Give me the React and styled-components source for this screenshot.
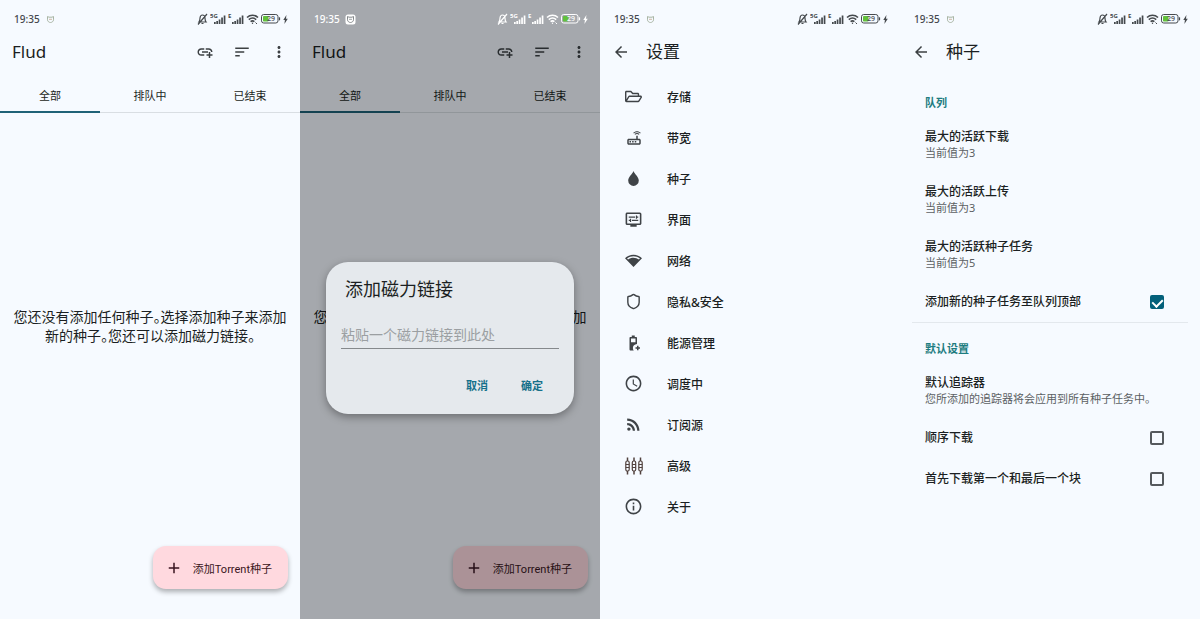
import React, { useState } from 'react';
import styled, { createGlobalStyle } from 'styled-components';
import {
  MdOutlineAddLink,
  MdSort,
  MdMoreVert,
  MdArrowBack,
  MdOutlineRouter,
  MdOutlineDisplaySettings,
  MdOutlineNetworkWifi,
  MdSchedule,
  MdRssFeed,
  MdInfoOutline,
  MdAdd
} from 'react-icons/md';
import { FaRegFolderOpen } from 'react-icons/fa';
import { Shield } from 'lucide-react';

const GlobalStyle = createGlobalStyle`
  * {
    box-sizing: border-box;
  }
  body {
    margin: 0;
    background: #f6faff;
    color: #1b1f22;
    font-family: "Noto Sans", "Noto Sans CJK SC", sans-serif;
  }
  button, input {
    font-family: inherit;
  }
`;

const Screens = styled.main`
  display: grid;
  grid-template-columns: repeat(4, 1fr);
  min-height: 100vh;
`;

const Phone = styled.section`
  position: relative;
  display: flex;
  flex-direction: column;
  min-width: 0;
  background: #f6faff;
`;

const StatusRow = styled.div`
  position: relative;
  z-index: 2;
  display: flex;
  align-items: center;
  justify-content: space-between;
  height: 32px;
  padding: 6px 12px 0 14px;
  color: ${(props) => (props.$light ? '#ffffff' : '#45494d')};
`;

const StatusGroup = styled.div`
  display: flex;
  align-items: center;
  gap: ${(props) => props.$gap}px;
`;

const Clock = styled.span`
  font-size: 10px;
  line-height: 14px;
  font-weight: 500;
`;

const AppBar = styled.header`
  display: flex;
  align-items: center;
  height: 40px;
  padding: 0 12px;
`;

const AppTitle = styled.h1`
  flex: 1;
  margin: 0;
  font-size: 17px;
  line-height: 24px;
  font-weight: 400;
`;

const Toolbar = styled.div`
  display: flex;
  gap: 19px;
`;

const IconButton = styled.button`
  display: flex;
  padding: 0;
  border: none;
  background: none;
  color: #3c4043;
  font-size: 18px;
  cursor: pointer;
`;

const BackButton = styled(IconButton)`
  margin-right: 16px;
`;

const Tabs = styled.nav`
  display: flex;
  padding-top: 8px;
  border-bottom: 1px solid #d9dee3;
`;

const Tab = styled.button`
  flex: 1;
  height: 33px;
  margin-bottom: -1px;
  padding: 0;
  border: none;
  border-bottom: 2px solid ${(props) => (props.$active ? '#1f6277' : 'transparent')};
  background: none;
  color: #1b1f22;
  font-size: 11px;
  line-height: 16px;
  cursor: pointer;
`;

const Empty = styled.div`
  flex: 1;
  display: flex;
  align-items: center;
  justify-content: center;
  padding: 0 12px;
`;

const EmptyText = styled.p`
  margin: 0;
  font-size: 14px;
  line-height: 19px;
  font-feature-settings: "palt";
  text-align: center;
`;

const Bottom = styled.footer`
  display: flex;
  justify-content: flex-end;
  padding: 8px 12px 30px;
`;

const AddTorrent = styled.button`
  display: flex;
  align-items: center;
  gap: 10px;
  height: 43px;
  padding: 0 16px 0 12px;
  border: none;
  border-radius: 13px;
  background: #ffd9df;
  box-shadow: 0 3px 5px rgba(0, 0, 0, 0.3);
  color: #3a1520;
  font-family: Roboto, "Noto Sans CJK SC", sans-serif;
  font-size: 11px;
  cursor: pointer;
`;

const Scrim = styled.div`
  position: absolute;
  inset: 0;
  z-index: 1;
  display: flex;
  align-items: center;
  justify-content: center;
  padding: 57px 26px 0;
  background: rgba(0, 3, 5, 0.33);
`;

const Dialog = styled.form`
  flex: 1;
  padding: 15px 15px 17px;
  border-radius: 22px;
  background: #e5e9ed;
  box-shadow: 0 3px 8px rgba(0, 0, 0, 0.35);
`;

const DialogTitle = styled.label`
  display: block;
  margin: 0 4px 20px;
  font-size: 18px;
  line-height: 24px;
`;

const MagnetInput = styled.input`
  display: block;
  width: 100%;
  height: 28px;
  padding: 0;
  border: none;
  border-bottom: 1px solid #85898c;
  border-radius: 0;
  background: none;
  color: #1b1f22;
  font-size: 14px;
  outline: none;
  &::placeholder {
    color: #9b9fa2;
  }
`;

const DialogActions = styled.div`
  display: flex;
  justify-content: flex-end;
  gap: 33px;
  padding: 24px 16px 0 0;
`;

const DialogButton = styled.button`
  height: 24px;
  padding: 0;
  border: none;
  background: none;
  color: #15708a;
  font-size: 11px;
  font-weight: 700;
  cursor: pointer;
`;

const ScreenTitle = styled.h1`
  margin: 0;
  font-size: 17px;
  line-height: 24px;
  font-weight: 400;
`;

const SettingsList = styled.nav`
  padding-top: 4px;
`;

const SettingsLink = styled.a`
  display: flex;
  align-items: center;
  gap: 23px;
  height: 41px;
  padding: 0 23px;
  color: #1b1f22;
  font-size: 12px;
  font-weight: 500;
  text-decoration: none;
`;

const IconSlot = styled.span`
  display: flex;
  justify-content: center;
  width: 21px;
  color: #3f4347;
`;

const Group = styled.section`
  & + & {
    border-top: 1px solid #e3e8ed;
    margin: 0 12px;
  }
  & + & > * {
    margin-left: -12px;
    margin-right: -12px;
  }
`;

const GroupTitle = styled.h2`
  margin: 0;
  padding: ${(props) => (props.$first ? 22 : 17)}px 25px 4px;
  color: #1d7c80;
  font-size: 11px;
  line-height: 18px;
  font-weight: 700;
`;

const Preference = styled.button`
  display: block;
  height: 55px;
  padding: 13px 25px 10px;
  border: none;
  background: none;
  text-align: left;
  white-space: nowrap;
  cursor: pointer;
`;

const PrefTitle = styled.span`
  display: block;
  color: #1b1f22;
  font-size: 12px;
  line-height: 16px;
  font-weight: 500;
`;

const PrefSummary = styled.span`
  display: block;
  color: #5b5f63;
  font-size: 11px;
  line-height: 16px;
`;

const CheckRow = styled.label`
  display: flex;
  align-items: center;
  justify-content: space-between;
  height: 41px;
  padding: 0 36px 0 25px;
  cursor: pointer;
`;

const CheckBox = styled.input`
  appearance: none;
  display: grid;
  justify-items: center;
  align-items: start;
  width: 14px;
  height: 14px;
  margin: 0;
  border: 2px solid #55595d;
  border-radius: 2px;
  &:checked {
    border-color: #03607a;
    background: #03607a;
  }
  &:checked::after {
    content: "";
    width: 5px;
    height: 8px;
    border: solid #ffffff;
    border-width: 0 2px 2px 0;
    transform: rotate(45deg);
  }
`;

const BellOff = () => (
  <svg width="11" height="12" viewBox="0 0 11 12" fill="none" stroke="currentColor" strokeWidth="1.200">
    <path d="M2 9c.9-1 .9-2 1-4C3.200 3 4.200 2 5.500 2S7.800 3 8 5c.1 2 .1 3 1 4zM4.500 10.500h2M10 1L1 11.500" />
  </svg>
);

const Signal = ({ label }) => (
  <svg width="16" height="12" viewBox="0 0 16 12" fill="currentColor">
    <text x="0" y="5" fontSize="6" fontWeight="700">{label}</text>
    <path d="M4 9h1.700v2H4zM6.300 8H8v3H6.300zM8.700 6.500h1.700V11H8.700zM11.200 4.500h1.700V11h-1.700zM13.700 2.500h1.700V11h-1.700z" />
  </svg>
);

const Wifi = () => (
  <svg width="13" height="12" viewBox="0 0 13 12" fill="none" stroke="currentColor" strokeWidth="1.600">
    <path d="M1 4.500c3.200-3 7.800-3 11 0M2.800 6.700c2.200-2 5.200-2 7.400 0M4.600 8.700c1.200-1 2.600-1 3.800 0" />
    <circle cx="6.500" cy="10.300" r=".7" fill="currentColor" stroke="none" />
    <path d="M9.500 9.500l1.500 1.500" strokeWidth="1" />
  </svg>
);

const Battery = () => (
  <svg width="20" height="10" viewBox="0 0 20 10">
    <rect x=".5" y=".5" width="16.500" height="8.500" rx="2.200" fill="none" stroke="currentColor" />
    <rect x="2" y="2" width="5.500" height="5.500" rx=".8" fill="#62c03c" />
    <path d="M18.500 3.300v3" stroke="currentColor" strokeWidth="1.200" />
    <text x="6" y="7.300" fontSize="7" fontWeight="500" fill="currentColor">29</text>
  </svg>
);

const Bolt = () => (
  <svg width="5" height="9" viewBox="0 0 5 9" fill="currentColor">
    <path d="M3.400 0L.3 5h1.600L1.400 9l3.400-5.300H3z" />
  </svg>
);

const Notice = ({ light }) => (
  <svg width="11" height="11" viewBox="0 0 11 11" fill="none">
    {light && <rect x=".5" y=".5" width="10" height="10" rx="2.500" fill="#ffffff" />}
    <path
      d="M2.500 2.500l1.500.7h3l1.500-.7v3.300C8.500 7.300 7 8.500 5.500 8.500S2.500 7.300 2.500 5.800z"
      stroke={light ? '#85898c' : '#a9b5a4'}
      strokeWidth="1"
    />
    <path d="M4 5.300h3" stroke={light ? '#85898c' : '#c4a88f'} strokeWidth=".8" />
  </svg>
);

const Drop = () => (
  <svg width="11" height="15" viewBox="0 0 11 15" fill="currentColor">
    <path d="M5.500 0C6.600 3 10.800 6 10.800 9.600a5.300 5.300 0 0 1-10.600 0C.2 6 4.400 3 5.500 0z" />
  </svg>
);

const BatteryPlus = () => (
  <svg width="18" height="18" viewBox="0 0 24 24" fill="currentColor">
    <path d="M14.700 4H13V2H9v2H7.300C6.600 4 6 4.600 6 5.300v15.400c0 .7.600 1.300 1.300 1.300h4.400c-.8-1-1.200-2.200-1.200-3.500 0-2.600 2.100-4.900 5.500-5.300V5.300C16 4.600 15.400 4 14.700 4zM14 11H8V6h6z" />
    <path d="M16 15.500h2v2h2v2h-2v2h-2v-2h-2v-2h2z" />
  </svg>
);

const Tuners = () => (
  <svg width="18" height="18" viewBox="0 0 18 18" fill="none" stroke="#51413e" strokeWidth="1.200">
    {[2.5, 9, 15.5].map((x) => (
      <g key={x}>
        <path d={`M${x} .5v3.500M${x} 14v3.500`} strokeWidth="1.500" />
        <rect x={x - 1.7} y="4" width="3.400" height="10" rx="1.500" />
        <path d={`M${x - 1.7} 7.500h3.400M${x - 1.7} 10.500h3.400`} />
      </g>
    ))}
  </svg>
);

const StatusBar = ({ light }) => (
  <StatusRow $light={light}>
    <StatusGroup $gap={5}>
      <Clock>19:35</Clock>
      <Notice light={light} />
    </StatusGroup>
    <StatusGroup $gap={2}>
      <BellOff />
      <Signal label="5G" />
      <Signal label="E" />
      <Wifi />
      <Battery />
      <Bolt />
    </StatusGroup>
  </StatusRow>
);

const TorrentScreen = ({ light, children }) => {
  const [active, setActive] = useState(0);

  return (
    <Phone>
      <StatusBar light={light} />
      <AppBar>
        <AppTitle>Flud</AppTitle>
        <Toolbar>
          <IconButton type="button" aria-label="添加磁力链接"><MdOutlineAddLink /></IconButton>
          <IconButton type="button" aria-label="排序"><MdSort /></IconButton>
          <IconButton type="button" aria-label="更多"><MdMoreVert /></IconButton>
        </Toolbar>
      </AppBar>
      <Tabs>
        {['全部', '排队中', '已结束'].map((tab, index) => (
          <Tab key={tab} type="button" $active={index === active} onClick={() => setActive(index)}>
            {tab}
          </Tab>
        ))}
      </Tabs>
      <Empty>
        <EmptyText>您还没有添加任何种子。选择添加种子来添加新的种子。您还可以添加磁力链接。</EmptyText>
      </Empty>
      <Bottom>
        <AddTorrent type="button">
          <MdAdd size={18} />
          添加Torrent种子
        </AddTorrent>
      </Bottom>
      {children}
    </Phone>
  );
};

const MagnetDialog = () => {
  const [magnet, setMagnet] = useState('');

  return (
    <Scrim>
      <Dialog role="dialog" onSubmit={(e) => e.preventDefault()}>
        <DialogTitle htmlFor="magnet">添加磁力链接</DialogTitle>
        <MagnetInput
          id="magnet"
          type="text"
          placeholder="粘贴一个磁力链接到此处"
          value={magnet}
          onChange={(e) => setMagnet(e.target.value)}
        />
        <DialogActions>
          <DialogButton type="button" onClick={() => setMagnet('')}>取消</DialogButton>
          <DialogButton type="submit">确定</DialogButton>
        </DialogActions>
      </Dialog>
    </Scrim>
  );
};

const settings = [
  { label: '存储', icon: <FaRegFolderOpen size={17} /> },
  { label: '带宽', icon: <MdOutlineRouter size={18} /> },
  { label: '种子', icon: <Drop /> },
  { label: '界面', icon: <MdOutlineDisplaySettings size={19} /> },
  { label: '网络', icon: <MdOutlineNetworkWifi size={17} /> },
  { label: '隐私&安全', icon: <Shield size={17} /> },
  { label: '能源管理', icon: <BatteryPlus /> },
  { label: '调度中', icon: <MdSchedule size={19} /> },
  { label: '订阅源', icon: <MdRssFeed size={19} /> },
  { label: '高级', icon: <Tuners /> },
  { label: '关于', icon: <MdInfoOutline size={19} /> }
];

const SettingsScreen = () => (
  <Phone>
    <StatusBar />
    <AppBar>
      <BackButton type="button" aria-label="返回"><MdArrowBack /></BackButton>
      <ScreenTitle>设置</ScreenTitle>
    </AppBar>
    <SettingsList>
      {settings.map(({ label, icon }) => (
        <SettingsLink key={label} href="#">
          <IconSlot>{icon}</IconSlot>
          {label}
        </SettingsLink>
      ))}
    </SettingsList>
  </Phone>
);

const PreferenceItem = ({ title, summary }) => (
  <Preference type="button">
    <PrefTitle>{title}</PrefTitle>
    <PrefSummary>{summary}</PrefSummary>
  </Preference>
);

const CheckItem = ({ title, checked }) => (
  <CheckRow>
    <PrefTitle>{title}</PrefTitle>
    <CheckBox type="checkbox" defaultChecked={checked} />
  </CheckRow>
);

const SeedScreen = () => (
  <Phone>
    <StatusBar />
    <AppBar>
      <BackButton type="button" aria-label="返回"><MdArrowBack /></BackButton>
      <ScreenTitle>种子</ScreenTitle>
    </AppBar>
    <Group>
      <GroupTitle $first>队列</GroupTitle>
      <PreferenceItem title="最大的活跃下载" summary="当前值为3" />
      <PreferenceItem title="最大的活跃上传" summary="当前值为3" />
      <PreferenceItem title="最大的活跃种子任务" summary="当前值为5" />
      <CheckItem title="添加新的种子任务至队列顶部" checked />
    </Group>
    <Group>
      <GroupTitle>默认设置</GroupTitle>
      <PreferenceItem title="默认追踪器" summary="您所添加的追踪器将会应用到所有种子任务中。" />
      <CheckItem title="顺序下载" />
      <CheckItem title="首先下载第一个和最后一个块" />
    </Group>
  </Phone>
);

export default function App() {
  return (
    <>
      <GlobalStyle />
      <Screens>
        <TorrentScreen />
        <TorrentScreen light>
          <MagnetDialog />
        </TorrentScreen>
        <SettingsScreen />
        <SeedScreen />
      </Screens>
    </>
  );
}
